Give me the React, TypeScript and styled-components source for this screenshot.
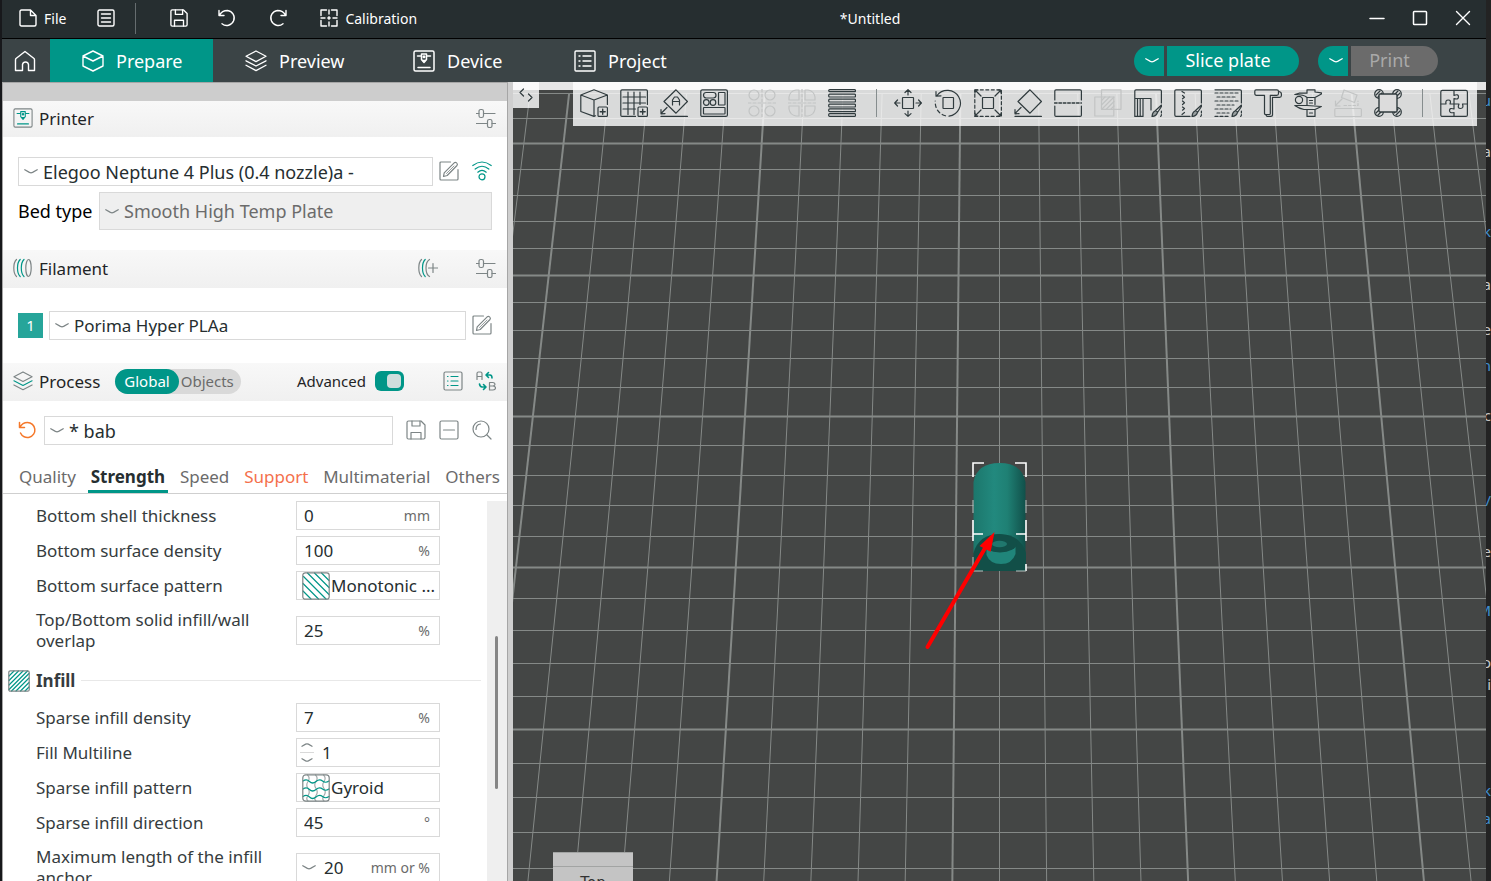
import React from "react";
import styled, { createGlobalStyle } from "styled-components";

const TEAL = "#009688";
const GRAY = "#6b6b6b";
const LINE = "#7d8586";

const GlobalStyle = createGlobalStyle`
  *, *::before, *::after { box-sizing: border-box; }
  body { margin: 0; background: #202020; }
  body, button, input, select {
    font-family: "Noto Sans", "Liberation Sans", sans-serif;
  }
  button { border: 0; padding: 0; background: none; color: inherit; }
  svg { display: block; flex: none; }
`;

/* ---------- shell ---------- */

const Desktop = styled.div`
  display: flex;
  height: 100vh;
  overflow: hidden;
  background: #1d1d1f;
`;

const LeftSliver = styled.div`
  flex: 0 0 2px;
  background: #17181b;
`;

const RightSliver = styled.div`
  position: relative;
  flex: 0 0 5px;
  overflow: hidden;
  background: #232323;
`;

const Fragment = styled.span<{ $top: number; $tone: string }>`
  position: absolute;
  right: 0;
  top: ${(p) => p.$top}px;
  color: ${(p) => p.$tone};
  font-size: 15px;
  line-height: 20px;
`;

const AppWindow = styled.main`
  display: flex;
  flex-direction: column;
  flex: 1;
  min-width: 0;
`;

const TitleBar = styled.header`
  display: flex;
  align-items: center;
  flex: 0 0 39px;
  padding: 0 2px 2px 17px;
  border-bottom: 1px solid #000;
  background: #262e30;
  color: #fff;
  font-size: 14px;
`;

const TitleButton = styled.button<{ $after?: number }>`
  display: flex;
  align-items: center;
  gap: 7px;
  height: 30px;
  margin-right: ${(p) => p.$after ?? 0}px;
  font-size: 14px;
`;

const TitleRule = styled.span`
  width: 1px;
  height: 31px;
  margin-right: 34px;
  background: #666d6f;
`;

const DocTitle = styled.h1`
  flex: 1;
  margin: 0 32px 0 0;
  font-size: 14px;
  font-weight: 400;
  text-align: center;
`;

const WindowButton = styled.button`
  display: grid;
  place-items: center;
  width: 43px;
  height: 36px;
`;

const NavBar = styled.nav`
  display: flex;
  align-items: center;
  flex: 0 0 43px;
  padding-right: 48px;
  background: #3b4446;
  color: #fff;
`;

const HomeButton = styled.button`
  display: grid;
  place-items: center;
  width: 48px;
  height: 43px;
  padding-right: 3px;
`;

const NavTab = styled.button<{ $width: number; $active?: boolean }>`
  display: flex;
  align-items: center;
  gap: 12px;
  width: ${(p) => p.$width}px;
  height: 43px;
  padding-left: 32px;
  background: ${(p) => (p.$active ? TEAL : "transparent")};
  font-size: 18px;
`;

const SplitButton = styled.div`
  display: flex;
  gap: 3px;
  margin-left: 19px;
  &:first-of-type { margin-left: auto; }
`;

const SplitCaret = styled.button`
  display: grid;
  place-items: center;
  width: 30px;
  height: 30px;
  padding-left: 5px;
  border-radius: 15px 0 0 15px;
  background: ${TEAL};
`;

const SplitMain = styled.button<{ $width: number }>`
  width: ${(p) => p.$width}px;
  height: 30px;
  padding: 0 10px 2px 0;
  border-radius: 0 15px 15px 0;
  background: ${TEAL};
  color: #fff;
  font-size: 18px;
  &:disabled { background: #6b6b6b; color: #a9a9a9; }
`;

const Body = styled.div`
  display: flex;
  flex: 1;
  min-height: 0;
`;

/* ---------- sidebar ---------- */

const Sidebar = styled.aside`
  display: flex;
  flex-direction: column;
  flex: 0 0 506px;
  min-height: 0;
  border-left: 1px solid #a6a6a6;
  border-right: 1px solid #a6a6a6;
  background: #fff;
  color: #1f2426;
  font-size: 17px;
`;

const Splitter = styled.div`
  flex: 0 0 5px;
  background: #cfcfcf;
`;

const GrayStrip = styled.div`
  flex: 0 0 19px;
  border-top: 1px solid #a6a6a6;
  background: #cdcdcd;
`;

const SectionHead = styled.div<{ $height?: number }>`
  display: flex;
  align-items: center;
  flex: 0 0 ${(p) => p.$height ?? 38}px;
  padding: 0 11px 2px 10px;
  background: linear-gradient(#f8f8f8, #f0f0f0);
`;

const SectionTitle = styled.h2`
  flex: 1;
  margin: 0 0 0 6px;
  font-size: 17px;
  font-weight: 400;
`;

const ProcessTitle = styled(SectionTitle)`
  flex: none;
`;

const IconButton = styled.button<{ $before?: number }>`
  margin-left: ${(p) => p.$before ?? 0}px;
`;

const Group = styled.div<{ $pad: number }>`
  display: flex;
  flex-direction: column;
  gap: 6px;
  padding: ${(p) => p.$pad}px 15px;
`;

const PresetGroup = styled(Group)`
  padding-bottom: 0;
`;

const Row = styled.div`
  display: flex;
  align-items: center;
  gap: 6px;
  ${IconButton} { padding-bottom: 2px; }
`;

const IconPair = styled.div`
  display: flex;
  gap: 13px;
`;

const PresetRow = styled(Row)`
  gap: 13px;
`;

const PresetPick = styled.div`
  display: flex;
  align-items: center;
  flex: 1;
  gap: 8px;
`;

const BedLabel = styled.label`
  width: 75px;
  color: #000;
  font-size: 18px;
  white-space: nowrap;
`;

const FilamentChip = styled.button`
  width: 25px;
  height: 25px;
  padding-bottom: 2px;
  background: #26a59a;
  color: #fff;
  font-size: 15px;
`;

const FieldBox = styled.div<{ $height?: number; $disabled?: boolean; $pad?: number }>`
  display: flex;
  align-items: center;
  flex: 1;
  gap: 5px;
  min-width: 0;
  height: ${(p) => p.$height ?? 29}px;
  padding-left: ${(p) => p.$pad ?? 5}px;
  border: 1px solid #d9d9d9;
  background: ${(p) => (p.$disabled ? "#efefef" : "#fff")};
`;

const Select = styled.select<{ $large?: boolean }>`
  flex: 1;
  min-width: 0;
  height: 26px;
  padding: 0;
  border: 0;
  background: transparent;
  appearance: none;
  color: #262e30;
  font-size: ${(p) => (p.$large ? 18 : 17)}px;
  &:disabled { color: ${GRAY}; opacity: 1; }
`;

const ScopeSwitch = styled.div`
  display: flex;
  height: 25px;
  margin-left: 15px;
  border-radius: 13px;
  background: #d9d9d9;
`;

const ScopeButton = styled.button<{ $active?: boolean }>`
  padding: ${(p) => (p.$active ? "0 9px" : "0 7px 0 2px")};
  border-radius: 13px;
  background: ${(p) => (p.$active ? TEAL : "transparent")};
  color: ${(p) => (p.$active ? "#fff" : "#6b6b6b")};
  font-size: 15px;
`;

const AdvancedLabel = styled.label`
  display: flex;
  align-items: center;
  gap: 9px;
  margin-left: auto;
  font-size: 15px;
`;

const Toggle = styled.input`
  display: flex;
  align-items: center;
  justify-content: flex-end;
  width: 29px;
  height: 20px;
  margin: 0;
  padding-right: 3px;
  border-radius: 6px;
  background: ${TEAL};
  appearance: none;
  &::before {
    content: "";
    width: 14px;
    height: 14px;
    border-radius: 4px;
    background: #cfdedd;
  }
`;

const TabRow = styled.div`
  display: flex;
  align-items: flex-end;
  justify-content: space-between;
  flex: 0 0 49px;
  padding: 0 7px 0 16px;
  border-bottom: 1px solid #cfcfcf;
`;

const SettingTab = styled.button<{ $active?: boolean; $warn?: boolean }>`
  height: 33px;
  margin: 0 -3px;
  padding: 3px 3px 0;
  border-bottom: 3px solid ${(p) => (p.$active ? TEAL : "transparent")};
  color: ${(p) => (p.$active ? "#262e30" : p.$warn ? "#f4704c" : "#6b6b6b")};
  font-size: 17px;
  font-weight: ${(p) => (p.$active ? 700 : 400)};
`;

const SettingsPane = styled.div`
  display: flex;
  flex: 1;
  min-height: 0;
  margin-top: 7px;
  overflow: hidden;
`;

const SettingsList = styled.div`
  display: flex;
  flex-direction: column;
  flex: 1;
  gap: 6px;
  padding: 0 6px 0 5px;
`;

const ScrollGutter = styled.div`
  flex: 0 0 20px;
  padding: 135px 0 0 8px;
  background: #efefef;
`;

const ScrollThumb = styled.div`
  width: 3px;
  height: 153px;
  border-radius: 2px;
  background: #868686;
`;

const SettingRow = styled.div<{ $tall?: boolean }>`
  display: grid;
  grid-template-columns: 260px 144px;
  align-items: center;
  flex: none;
  padding: ${(p) => (p.$tall ? "3px 0 5px 28px" : "0 0 0 28px")};
`;

const SettingLabel = styled.label`
  padding-right: 20px;
  color: #363c3e;
  line-height: 21px;
`;

const ValueInput = styled.input<{ $indent?: number }>`
  flex: 1;
  width: 0;
  min-width: 0;
  height: 24px;
  padding: 0 0 0 ${(p) => p.$indent ?? 0}px;
  border: 0;
  background: transparent;
  color: #262e30;
  font-size: 17px;
`;

const Unit = styled.span`
  padding-right: 9px;
  color: ${GRAY};
  font-size: 14px;
`;

const Spinner = styled.div`
  display: flex;
  flex-direction: column;
  gap: 5px;
  width: 14px;
  margin: 0 3px 0 -2px;
`;

const SpinnerRule = styled.span`
  height: 1px;
  background: #d9d9d9;
`;

const ListHead = styled.h3`
  display: flex;
  align-items: center;
  gap: 6px;
  flex: 0 0 22px;
  margin: 7px 0 5px;
  color: #363c3e;
  font-size: 17px;
  font-weight: 700;
  &::after {
    content: "";
    flex: 1;
    height: 1px;
    background: #e8e8e8;
  }
`;

/* ---------- viewport ---------- */

const Viewport = styled.section`
  position: relative;
  flex: 1;
  min-width: 0;
  overflow: hidden;
  background: #444645;
`;

const Scene = styled.svg`
  position: absolute;
  inset: 0;
  width: 100%;
  height: 100%;
`;

const Overlay = styled.div`
  position: relative;
  display: flex;
  align-items: flex-start;
  justify-content: space-between;
  padding-right: 9px;
`;

const CollapseButton = styled.button`
  display: grid;
  place-items: center;
  width: 26px;
  height: 26px;
  background: rgba(255, 255, 255, 0.8);
`;

const Toolbar = styled.div`
  display: flex;
  gap: 12px;
  height: 44px;
  padding: 7px 9px 0 7px;
  background: rgba(255, 255, 255, 0.8);
`;

const ToolButton = styled.button<{ $gap?: boolean }>`
  height: 28px;
  margin-left: ${(p) => (p.$gap ? 8 : 0)}px;
  color: #303b3e;
  &:disabled { color: #c2c4c4; }
`;

const ToolRule = styled.span`
  width: 1px;
  height: 28px;
  margin: 0 5px 0 8px;
  background: #868d8e;
`;

/* ---------- icons ---------- */

type IconProps = {
  size?: number;
  box?: number;
  color?: string;
  width?: number;
  children: React.ReactNode;
};

const Icon = ({ size = 20, box, color = "currentColor", width = 1.2, children }: IconProps) => (
  <svg
    width={size}
    height={size}
    viewBox={`0 0 ${box ?? size} ${box ?? size}`}
    fill="none"
    stroke={color}
    strokeWidth={width}
    strokeLinecap="round"
    strokeLinejoin="round"
    aria-hidden="true"
  >
    {children}
  </svg>
);

const Chevron = ({ color = LINE, up = false }: { color?: string; up?: boolean }) => (
  <svg width="14" height="5" viewBox="0 0 14 5" fill="none" stroke={color} strokeWidth="1.3" strokeLinecap="round" aria-hidden="true">
    <path d={up ? "M.8 4.2L5.4 1.6Q7 .8 8.6 1.6L13.2 4.2" : "M.8 .8L5.4 3.4Q7 4.2 8.6 3.4L13.2 .8"} />
  </svg>
);

const SpinChevron = ({ up = false }: { up?: boolean }) => (
  <svg width="14" height="4" viewBox="0 0 14 4" fill="none" stroke={LINE} strokeWidth="1.3" strokeLinecap="round" aria-hidden="true">
    <path d={up ? "M2 3.2L5.6 1.2Q7 .6 8.4 1.2L12 3.2" : "M2 .8L5.6 2.8Q7 3.4 8.4 2.8L12 .8"} />
  </svg>
);

const SaveShape = () => (
  <>
    <path d="M2.5 1H15L19 5V17.5Q19 19 17.5 19H2.5Q1 19 1 17.5V2.5Q1 1 2.5 1Z" />
    <path d="M6 1V6H14V1M5 19V12.5H15V19" />
  </>
);

const LayersShape = ({ accent }: { accent?: string }) => (
  <>
    <path d="M11 1L21 6.3L11 11.6L1 6.3Z" />
    <path d="M1 10.8L11 16L21 10.8" stroke={accent} />
    <path d="M1 15.3L11 20.6L21 15.3" />
  </>
);

const PrinterShape = ({ accent }: { accent?: string }) => (
  <>
    <rect x="1" y="1" width="20" height="20" rx="1.5" />
    <g stroke={accent}>
      <path d="M4.5 6H8M14 6H17.5M5 17.5H17" />
      <path d="M8.5 4H13.5V9.5L11 12.5L8.5 9.5Z" />
      <path d="M9.5 10.5H12.5" />
      <circle cx="11" cy="6.8" r=".8" />
    </g>
  </>
);

const EditIcon = () => (
  <Icon color={LINE}>
    <path d="M11.5 1H2Q1 1 1 2V18Q1 19 2 19H18Q19 19 19 18V8.5" />
    <path d="M4.5 15.5L5.2 11.8L15.2 1.8Q16.4 .8 17.6 1.9Q19 3.1 18 4.5L8.2 14.5Z" />
    <path d="M7.5 12.5L15 5" strokeWidth=".8" />
  </Icon>
);

const SlidersIcon = () => (
  <Icon color={LINE}>
    <path d="M0 5.5H3M7.5 5.5H19M0 15.5H11.5M16 15.5H19.5" />
    <rect x="3" y="1.5" width="4.5" height="8" rx="1.8" />
    <rect x="11.5" y="11.5" width="4.5" height="8" rx="1.8" />
  </Icon>
);

const Brush = () => (
  <>
    <path d="M27.5 16L21.5 21.5L23.5 23.5L27.8 17Z" />
    <path d="M21.5 21.8Q18.5 22.5 18 27.5Q22.8 27.2 23.3 23.7" fill="#9aa0a1" />
    <path d="M27.4 22V26Q27.4 27.4 26 27.4" strokeDasharray="2 1.5" />
  </>
);

const HatchDown = () => (
  <Icon size={28} color={LINE}>
    <path stroke={TEAL} d="M1 19L9 27M1 11.5L16.5 27M1.5 4.5L24 27M5.5 1L27 22.5M12.5 1L27 15.5M19.5 1L27 8.5" />
    <rect x=".8" y=".8" width="26.4" height="26.4" rx="2.5" />
  </Icon>
);

const HatchUp = () => (
  <Icon size={22} color={LINE}>
    <path stroke={TEAL} d="M1 6L6 1M1 10.5L10.5 1M1 15L15 1M1 19.5L19.5 1M3.5 21L21 3.5M8 21L21 8M12.5 21L21 12.5M17 21L21 17" />
    <rect x=".8" y=".8" width="20.4" height="20.4" rx="1.5" />
  </Icon>
);

const GyroidIcon = () => (
  <Icon size={28} color={LINE}>
    <path
      stroke="#a5abac"
      d="M5.5 1Q8.5 4 6 7.5T6 14.5T6 21.5T6 27M13.5 1Q16.5 4 14 7.5T14 14.5T14 21.5T14 27M21.5 1Q24.5 4 22 7.5T22 14.5T22 21.5T22 27"
    />
    <path
      stroke={TEAL}
      d="M1 7Q4.5 4.5 7.5 7.5T14 7.5T20.5 7T27 7M1 15Q4.5 12.5 7.5 15.5T14 15.5T20.5 15T27 15M1 22.5Q4.5 20 7.5 23T14 23T20.5 22.5T27 22.5"
    />
    <rect x=".8" y=".8" width="26.4" height="26.4" rx="3" />
  </Icon>
);

const PlusBadge = () => (
  <>
    <rect x="18" y="18" width="9.4" height="9.4" rx="1" />
    <path d="M22.7 20.2V25.2M20.2 22.7H25.2" strokeWidth="1.4" />
  </>
);

const tools: { name: string; off?: boolean; gap?: boolean; rule?: boolean; art: React.ReactNode }[] = [
  {
    name: "Add object",
    art: (
      <>
        <path d="M27.4 15.5V6L14 .8L.8 6V22.5L14 27.4L15.5 26.8M.8 6L14 11L27.4 6M14 11V27.4" />
        <PlusBadge />
      </>
    ),
  },
  {
    name: "Add plate",
    art: (
      <>
        <path d="M27.4 15.5V2Q27.4 .8 26.3 .8H2Q.8 .8 .8 2V26.3Q.8 27.4 2 27.4H15.5" />
        <path d="M8 3V25.5M14 3V25.5M20 3V15.5M3 8H25.5M3 14H25.5M3 20H15.5" />
        <PlusBadge />
      </>
    ),
  },
  {
    name: "Auto orient",
    art: (
      <>
        <path d="M16 .8L27.4 12.5L16 24.2L4 12.5Z" />
        <path d="M12.5 16V11L14.5 8H17.5L19.5 11V16M12.5 12.5H19.5M7 18.5L1 24.5M1 20.5V24.8L5 24.6" />
        <path d="M1 27.4H27.4" />
      </>
    ),
  },
  {
    name: "Arrange",
    art: (
      <>
        <rect x=".8" y=".8" width="26.6" height="26.6" rx="1.5" />
        <rect x="3.5" y="3.5" width="12.5" height="5.5" rx="2.7" />
        <rect x="18.5" y="3.5" width="6.5" height="12.5" rx=".5" />
        <circle cx="6.3" cy="13.5" r="2.8" />
        <circle cx="13" cy="13.5" r="2.8" />
        <rect x="3.5" y="18.5" width="21.5" height="6.5" rx=".5" />
      </>
    ),
  },
  {
    name: "Split to objects",
    off: true,
    gap: true,
    art: (
      <>
        <circle cx="6" cy="6" r="5" />
        <circle cx="22" cy="6" r="5" />
        <circle cx="6" cy="22" r="5" />
        <circle cx="22" cy="22" r="5" />
        <path strokeDasharray="3 2" d="M14 0V28M0 14H28" />
      </>
    ),
  },
  {
    name: "Split to parts",
    off: true,
    art: (
      <>
        <path d="M11 11H1V8Q2 2 8 1H11ZM17 11H27V8Q26 2 20 1H17ZM11 17H1V20Q2 26 8 27H11ZM17 17H27V20Q26 26 20 27H17Z" />
        <path strokeDasharray="3 2" d="M14 0V28M0 14H28" />
      </>
    ),
  },
  {
    name: "Variable layer height",
    art: (
      <>
        {[0.7, 5.2, 10.2, 15.2, 19.9, 24.6].map((y, i) => (
          <rect key={y} x=".7" y={y} width="26.8" height={i === 0 ? 2 : 2.8} rx="1" />
        ))}
      </>
    ),
  },
  {
    name: "Move",
    rule: true,
    art: (
      <>
        <rect x="8.5" y="8.5" width="11" height="11" rx=".5" />
        <path d="M14 6V.8M11 3.5L14 .7L17 3.5M14 22V27.3M11 24.6L14 27.4L17 24.6M6 14H.8M3.5 11L.7 14L3.5 17M22 14H27.3M24.6 11L27.4 14L24.6 17" />
      </>
    ),
  },
  {
    name: "Rotate",
    art: (
      <>
        <rect x="9" y="8.5" width="10.5" height="11" rx=".5" />
        <path d="M3 6.5A13 13 0 1 1 15 27.2M2 2.5V7.2L7 6.8" />
        <path strokeDasharray="3.5 3" d="M11.5 26.8Q1 23.5 1.2 12" />
      </>
    ),
  },
  {
    name: "Scale",
    art: (
      <>
        <rect x="8.5" y="8.5" width="11" height="11" rx=".5" />
        <rect x=".8" y=".8" width="26.6" height="26.6" strokeDasharray="3 2.5" />
        <path d="M7 7L1.5 1.5M21 7L26.5 1.5M7 21L1.5 26.5M21 21L26.5 26.5M1 4V1H4M24 1H27V4M1 24V27H4M24 27H27V24" />
      </>
    ),
  },
  {
    name: "Lay on face",
    art: (
      <>
        <path d="M16 .8L27.4 12.5L16 24.2L4 12.5Z" />
        <path d="M7 18.5L1 24.5M1 20.5V24.8L5 24.6M1 27.4H27.4" />
      </>
    ),
  },
  {
    name: "Cut",
    art: (
      <>
        <path d="M.8 11V2Q.8 .8 2 .8H26Q27.4 .8 27.4 2V11M.8 17V26.2Q.8 27.4 2 27.4H26Q27.4 27.4 27.4 26.2V17" />
        <path strokeDasharray="2.6 1.8" d="M.5 14H27.5" strokeWidth="1.4" />
      </>
    ),
  },
  {
    name: "Mesh boolean",
    off: true,
    art: (
      <>
        <rect x=".8" y="8" width="19" height="19" />
        <rect x="7.5" y=".8" width="19.5" height="19.5" />
        <path d="M8 11L11 8M8 15.5L15.5 8M8 20L20 8M12.5 20L20 12.5M17 20L20 17" />
      </>
    ),
  },
  {
    name: "Paint supports",
    art: (
      <>
        <path d="M27.4 14V2Q27.4 .8 26 .8H2Q.8 .8 .8 2V9.5M.8 9.5H17V21M9 9.5V27.4H.8V9.5M3.5 9.5V27M6.2 9.5V27" />
        <Brush />
      </>
    ),
  },
  {
    name: "Paint seam",
    art: (
      <>
        <path d="M27.4 14V2Q27.4 .8 26 .8H2Q.8 .8 .8 2V26Q.8 27.4 2 27.4H16" />
        <path d="M8 2.5L10.5 4M8.5 6.5L10.5 8.2L8.500 9.8M8.5 12L10.5 13.8L8.5 15.500M8.5 18L10.5 19.5L8.5 21.2M10.500 23.5L8 25.5" />
        <Brush />
      </>
    ),
  },
  {
    name: "Fuzzy skin",
    art: (
      <>
        <path d="M1 .8H26Q27.4 .8 27.4 2V14" />
        <path strokeDasharray="3 2" d="M1 4H24M3 8H22M1 12H24M3 16H20M1 20H17M3 24H15M1 27.4H15" />
        <Brush />
      </>
    ),
  },
  {
    name: "Text shape",
    art: (
      <>
        <path d="M2 .8H23Q24.5 .8 24.5 2.5V4.5Q24.5 6.3 22.8 6.3H16.3V24.5Q16.3 25.5 15.3 25.5H11.5Q10.5 25.5 10.5 24.5V6.3H2.5Q.8 6.3 .8 4.5V2.2Q.8 .8 2 .8Z" />
        <path d="M25 2.5Q27.4 3 27.4 5V6.5Q27.4 8.3 25.5 8.3H18.5V26Q18.5 27.4 17 27.4H13L11.5 25.5" />
      </>
    ),
  },
  {
    name: "Measure",
    art: (
      <>
        <path d="M.8 5.5L5 4.2H13V.8H21V3L27.4 3.8V5L21 8.5H13Q10 5.5 .8 5.5ZM13 8.5V16M21 8.5V15.5" />
        <circle cx="5" cy="11" r="3.6" />
        <path d="M.8 16.5H13L27.4 17.5L21 20.5H10Q5 19.5 .8 16.5ZM13 20.5V27.4H21V20.5M15.5 24H18.5M15.5 11.5H18.5M15.5 14H18.5" />
      </>
    ),
  },
  {
    name: "Assemble",
    off: true,
    art: (
      <>
        <path d="M10 1L23 6L20.5 13.5L7.5 8.5ZM8 10L1.5 16.5M1.5 12V17H6" />
        <rect x=".8" y="19.5" width="26.6" height="8" rx="1" />
        <path strokeDasharray="2.5 2" d="M10 16.5H24V12" />
      </>
    ),
  },
  {
    name: "Brim ears",
    art: (
      <>
        {[
          [5, 5],
          [23, 5],
          [5, 23],
          [23, 23],
        ].map(([x, y]) => (
          <g key={`${x}-${y}`}>
            <circle cx={x} cy={y} r="4.3" />
            <path d={`M${x - 3} ${y + 1}L${x + 1} ${y - 3}M${x - 1} ${y + 3}L${x + 3} ${y - 1}`} />
          </g>
        ))}
        <rect x="5" y="5" width="18" height="18" rx="1" fill="#dcdcdc" strokeWidth="1.4" />
      </>
    ),
  },
  {
    name: "Assembly view",
    rule: true,
    art: (
      <>
        <rect x=".8" y="1.4" width="26.6" height="26" rx="1.5" />
        <path d="M14 2V6.5Q18.500 4.5 18.5 7.8T14 9.5V15H10Q11.5 11 8.3 11T6 15H1M14 15H19Q17 19.5 20.5 19.5T22.5 15H27M14 15V20Q9.5 18.5 9.5 21.5T14 23.5V27" />
      </>
    ),
  },
];

/* ---------- 3D scene ---------- */

const CENTER_X = 999.5;
const spacingAt = (y: number) => 39.6 + 0.0102 * (y - 140);
const columnX = (i: number, y: number) => CENTER_X + i * spacingAt(y);
const plateRows = [
  93, 118, 143, 169, 195, 221, 248, 275, 302, 330, 358, 387, 416, 445, 475, 505, 536, 567, 598, 630, 663, 696, 729,
  763, 797, 832, 868,
];
const plateColumns = Array.from({ length: 27 }, (_, k) => k - 13);

const PlateScene = () => (
  <Scene viewBox="513 82 973 799" preserveAspectRatio="xMidYMin slice" role="img" aria-label="Build plate">
    <defs>
      <linearGradient id="tube" x1="0" x2="1" y1="0" y2="0">
        <stop offset="0" stopColor="#1c776c" />
        <stop offset=".4" stopColor="#22897e" />
        <stop offset=".65" stopColor="#1f8074" />
        <stop offset="1" stopColor="#11504a" />
      </linearGradient>
      <clipPath id="plate">
        <rect x="513" y="90" width="973" height="900" />
      </clipPath>
    </defs>
    <rect x="513" y="82" width="973" height="8" fill="#e6e6e6" />
    <g clipPath="url(#plate)" stroke="#858987">
      {plateRows.map((y, k) => (
        <path key={y} d={`M513 ${y + 0.5}H1486`} strokeWidth={k % 5 === 2 ? 1.8 : 1} />
      ))}
      {plateColumns.map((i) => (
        <path
          key={i}
          d={`M${columnX(i, 93)} 93L${columnX(i, 900)} 900`}
          strokeWidth={(i + 16) % 5 === 0 ? 2 : 1}
        />
      ))}
    </g>

    <path d="M973.5 553V482Q977 463 999.5 463T1025.5 482V553Z" fill="url(#tube)" />
    <path d="M973.5 571V553Q979 534 999.5 534T1026 553V571Z" fill="#124f48" />
    <path d="M986.5 546V555Q990 564 1001 564T1015.5 554V544Z" fill="#20857a" />
    <ellipse cx="1000" cy="543.5" rx="17" ry="9" fill="#124f48" />
    <ellipse cx="999.5" cy="544" rx="7.5" ry="3.2" fill="#20776d" />
    <g fill="none" stroke="#fff" strokeWidth="1.6">
      <path d="M973 477V463H984M1015 463H1026V477M973 520V541M1026 520V541M973 534H983M1016 534H1026M1026 564V571" />
      <path d="M973 500V513M1026 500V513M973 557V571H983M1016 571H1026" stroke="#b9c4c2" strokeWidth="1" />
    </g>

    <path d="M927.5 647L988 543" stroke="#f00" strokeWidth="4" strokeLinecap="round" />
    <path d="M994.5 532L979.5 546L990.7 551.7Z" fill="#f00" />

    <rect x="553" y="852" width="80" height="40" fill="#c4c4c4" />
    <path d="M553 852.5H633M553 866.5H633" stroke="#a2a4a3" />
    <text x="593" y="888" fill="#333" fontFamily="DejaVu Sans, sans-serif" fontSize="15" textAnchor="middle">
      Top
    </text>
  </Scene>
);

/* ---------- data ---------- */

const fragments: [number, string, string][] = [
  [90, "u", "#3f8fd0"],
  [141, "a", "#c8c8c8"],
  [221, "k", "#3f8fd0"],
  [274, "a", "#c8c8c8"],
  [319, "e", "#c8c8c8"],
  [355, "n", "#3f8fd0"],
  [405, "c", "#c8c8c8"],
  [490, "/", "#3f8fd0"],
  [541, "e", "#c8c8c8"],
  [600, "M", "#3f8fd0"],
  [652, "o", "#c8c8c8"],
  [674, "i", "#c8c8c8"],
  [780, "k", "#3f8fd0"],
  [808, "a", "#3f8fd0"],
];

type Setting = {
  id: string;
  label: string;
  value: string;
  unit?: string;
  kind?: "spin" | "combo";
  icon?: React.ReactNode;
  tall?: boolean;
};

const shellSettings: Setting[] = [
  { id: "bst", label: "Bottom shell thickness", value: "0", unit: "mm" },
  { id: "bsd", label: "Bottom surface density", value: "100", unit: "%" },
  { id: "bsp", label: "Bottom surface pattern", value: "Monotonic ...", icon: <HatchDown /> },
  { id: "tbo", label: "Top/Bottom solid infill/wall overlap", value: "25", unit: "%", tall: true },
];

const infillSettings: Setting[] = [
  { id: "sid", label: "Sparse infill density", value: "7", unit: "%" },
  { id: "fml", label: "Fill Multiline", value: "1", kind: "spin" },
  { id: "sip", label: "Sparse infill pattern", value: "Gyroid", icon: <GyroidIcon /> },
  { id: "sir", label: "Sparse infill direction", value: "45", unit: "°" },
  { id: "mla", label: "Maximum length of the infill anchor", value: "20", unit: "mm or %", kind: "combo", tall: true },
];

const PatternBox = styled(FieldBox)`
  gap: 1px;
`;

const SettingField = ({ item }: { item: Setting }) => {
  if (item.icon) {
    return (
      <PatternBox $pad={5}>
        {item.icon}
        <Select id={item.id}>
          <option>{item.value}</option>
        </Select>
      </PatternBox>
    );
  }
  return (
    <FieldBox $pad={item.kind ? 5 : 7}>
      {item.kind === "spin" && (
        <Spinner>
          <SpinChevron up />
          <SpinnerRule />
          <SpinChevron />
        </Spinner>
      )}
      {item.kind === "combo" && <Chevron />}
      <ValueInput id={item.id} defaultValue={item.value} $indent={item.kind === "combo" ? 3 : 0} />
      {item.unit && <Unit>{item.unit}</Unit>}
    </FieldBox>
  );
};

const SettingRows = ({ items }: { items: Setting[] }) => (
  <>
    {items.map((item) => (
      <SettingRow key={item.id} $tall={item.tall}>
        <SettingLabel htmlFor={item.id}>{item.label}</SettingLabel>
        <SettingField item={item} />
      </SettingRow>
    ))}
  </>
);

const settingTabs = ["Quality", "Strength", "Speed", "Support", "Multimaterial", "Others"];

export default function App() {
  return (
    <Desktop>
      <GlobalStyle />
      <LeftSliver />
      <AppWindow>
        <TitleBar>
          <TitleButton $after={31}>
            <Icon size={18} width={1.4}>
              <path d="M2.5 1H11.5L17 6.5V15.5Q17 17 15.5 17H2.5Q1 17 1 15.5V2.5Q1 1 2.5 1ZM11.5 1V6.5H17" />
            </Icon>
            File
          </TitleButton>
          <TitleButton $after={20} aria-label="Menu">
            <Icon size={18} width={1.4}>
              <rect x="1" y="1" width="16" height="16" rx="1.5" />
              <path d="M4.5 5H13.5M4.5 9H13.5M4.5 13H13.5" />
            </Icon>
          </TitleButton>
          <TitleRule />
          <TitleButton $after={30} aria-label="Save">
            <Icon size={18} box={20} width={1.5}>
              <SaveShape />
            </Icon>
          </TitleButton>
          <TitleButton $after={33} aria-label="Undo">
            <Icon size={18} width={1.4}>
              <path d="M1 1.5V6.5H6M1.300 6.3Q4 1.5 9.5 1.5A7.5 7.5 0 1 1 4 14.8" />
            </Icon>
          </TitleButton>
          <TitleButton $after={33} aria-label="Redo">
            <Icon size={18} width={1.4}>
              <path d="M17 1.5V6.5H12M16.7 6.3Q14 1.5 8.5 1.5A7.5 7.5 0 1 0 14 14.8" />
            </Icon>
          </TitleButton>
          <TitleButton>
            <Icon size={18} width={1.4}>
              <path d="M6.5 1H1V6.5M11.5 1H17V6.5M6.5 17H1V11.5M11.5 17H17V11.5M9 1V5M9 13V17M1 9H5M13 9H17M7.8 9H10.2M9 7.8V10.2" />
            </Icon>
            Calibration
          </TitleButton>
          <DocTitle>*Untitled</DocTitle>
          <WindowButton aria-label="Minimize">
            <Icon size={16} width={1.5}>
              <path d="M1 8.5H15" />
            </Icon>
          </WindowButton>
          <WindowButton aria-label="Maximize">
            <Icon size={16} width={1.5}>
              <rect x="1.5" y="1.5" width="13" height="13" rx=".8" />
            </Icon>
          </WindowButton>
          <WindowButton aria-label="Close">
            <Icon size={16} width={1.4}>
              <path d="M1.5 1.5L14.5 14.5M14.5 1.5L1.5 14.5" />
            </Icon>
          </WindowButton>
        </TitleBar>

        <NavBar>
          <HomeButton aria-label="Home">
            <Icon size={22} width={1.4}>
              <path d="M2 8.5L11 1.5L20 8.5Q20.5 9 20.5 10V20.5H14.5V14.5Q14 12 11.500 12T8.5 14.5V20.5H1.5V10Q1.5 9 2 8.5Z" />
            </Icon>
          </HomeButton>
          <NavTab $width={163} $active>
            <Icon size={22} width={1.4}>
              <path d="M11 1L21 6V16L11 21L1 16V6ZM1 6L11 11L21 6" />
            </Icon>
            Prepare
          </NavTab>
          <NavTab $width={168}>
            <Icon size={22} width={1.3}>
              <LayersShape />
            </Icon>
            Preview
          </NavTab>
          <NavTab $width={161}>
            <Icon size={22} width={1.5}>
              <PrinterShape />
            </Icon>
            Device
          </NavTab>
          <NavTab $width={160}>
            <Icon size={22} width={1.4}>
              <rect x="1" y="1" width="20" height="20" rx="1" />
              <path d="M5 6H6M9 6H17M5 11H6M9 11H17M5 16H6M9 16H17" />
            </Icon>
            Project
          </NavTab>
          <SplitButton>
            <SplitCaret aria-label="Slice options">
              <Chevron color="#fff" />
            </SplitCaret>
            <SplitMain $width={132}>Slice plate</SplitMain>
          </SplitButton>
          <SplitButton>
            <SplitCaret aria-label="Print options">
              <Chevron color="#fff" />
            </SplitCaret>
            <SplitMain $width={87} disabled>
              Print
            </SplitMain>
          </SplitButton>
        </NavBar>

        <Body>
          <Sidebar>
            <GrayStrip />
            <SectionHead $height={36}>
              <Icon color={LINE} box={22}>
                <PrinterShape accent={TEAL} />
              </Icon>
              <SectionTitle>Printer</SectionTitle>
              <IconButton aria-label="Printer settings">
                <SlidersIcon />
              </IconButton>
            </SectionHead>
            <Group $pad={20}>
              <Row>
                <FieldBox>
                  <Chevron />
                  <Select $large aria-label="Printer preset">
                    <option>Elegoo Neptune 4 Plus (0.4 nozzle)a -</option>
                  </Select>
                </FieldBox>
                <IconPair>
                  <IconButton aria-label="Edit printer">
                    <EditIcon />
                  </IconButton>
                  <IconButton aria-label="Network">
                    <Icon color={TEAL}>
                      <path d="M.8 4.5Q10 -2.5 19.2 4.5M3.2 8Q10 2.5 16.8 8M5.8 11.2Q10 7.5 14.2 11.2" />
                      <circle cx="10" cy="15.8" r="3" />
                    </Icon>
                  </IconButton>
                </IconPair>
              </Row>
              <Row>
                <BedLabel htmlFor="bed">Bed type</BedLabel>
                <FieldBox $height={38} $disabled>
                  <Chevron />
                  <Select $large id="bed" disabled>
                    <option>Smooth High Temp Plate</option>
                  </Select>
                </FieldBox>
              </Row>
            </Group>

            <SectionHead>
              <Icon color={LINE}>
                <ellipse cx="15.5" cy="10" rx="2.7" ry="8.5" />
                <path d="M3.5 1.5Q.8 4 .8 10T3.5 18.5" />
                <path stroke={TEAL} d="M7.2 1.5Q4.5 4 4.5 10T7.2 18.5M11 1.5Q8.3 4 8.3 10T11 18.5" />
              </Icon>
              <SectionTitle>Filament</SectionTitle>
              <IconButton aria-label="Add filament">
                <Icon color={LINE}>
                  <path d="M3.5 1.5Q.8 4 .8 10T3.5 18.5M11.5 1.5Q8 3.5 8 10T11.5 18.5M10.500 10H19.5M15 5.5V14.5" />
                  <path stroke={TEAL} d="M7.2 1.5Q4.5 4 4.5 10T7.2 18.5" />
                </Icon>
              </IconButton>
              <IconButton $before={38} aria-label="Filament settings">
                <SlidersIcon />
              </IconButton>
            </SectionHead>
            <Group $pad={23}>
              <Row>
                <FilamentChip>1</FilamentChip>
                <FieldBox>
                  <Chevron />
                  <Select aria-label="Filament preset">
                    <option>Porima Hyper PLAa</option>
                  </Select>
                </FieldBox>
                <IconButton aria-label="Edit filament">
                  <EditIcon />
                </IconButton>
              </Row>
            </Group>

            <SectionHead>
              <Icon color={LINE} box={22}>
                <LayersShape accent={TEAL} />
              </Icon>
              <ProcessTitle>Process</ProcessTitle>
              <ScopeSwitch>
                <ScopeButton $active>Global</ScopeButton>
                <ScopeButton>Objects</ScopeButton>
              </ScopeSwitch>
              <AdvancedLabel>
                Advanced
                <Toggle type="checkbox" defaultChecked />
              </AdvancedLabel>
              <IconButton $before={39} aria-label="Setting list">
                <Icon color={LINE}>
                  <rect x="1" y="1" width="18" height="18" rx="1.5" />
                  <path stroke={TEAL} d="M4.5 5.5H5M8 5.5H15M4.5 10H5M8 10H15M4.5 14.5H5M8 14.5H15" />
                </Icon>
              </IconButton>
              <IconButton $before={13} aria-label="Compare presets">
                <Icon color={LINE}>
                  <path d="M1 8.5V2.5Q1 1 2.5 1H4.5Q6 1 6 2.5V8.5M1 5.5H6M13.5 11.5H17Q19 11.8 19 13.2T17 15H13.5M17 15Q19.5 15.2 19.5 17T17 19H13.5V11.5" />
                  <path stroke={TEAL} strokeWidth="1.6" d="M12.5 1.5L10 4L12.5 6.5M10.5 4H14Q16 4.2 16 7M7.5 18.5L10 16L7.5 13.5M9.5 16H6Q4 15.8 3.5 13" />
                </Icon>
              </IconButton>
            </SectionHead>
            <PresetGroup $pad={15}>
              <PresetRow>
                <PresetPick>
                  <IconButton aria-label="Reset preset">
                    <Icon size={18} color="#f5782a" width={1.5}>
                      <path d="M1.5 1.5V6.5H6.5M1.8 6.3Q4.500 1.5 9.5 1.5A7.5 7.5 0 1 1 2.5 12" />
                    </Icon>
                  </IconButton>
                  <FieldBox>
                    <Chevron />
                    <Select $large aria-label="Process preset">
                      <option>* bab</option>
                    </Select>
                  </FieldBox>
                </PresetPick>
                <IconButton aria-label="Save preset">
                  <Icon color={LINE}>
                    <SaveShape />
                  </Icon>
                </IconButton>
                <IconButton aria-label="Delete preset">
                  <Icon color={LINE}>
                    <rect x="1" y="1" width="18" height="18" rx="1.5" />
                    <path d="M4.5 10H15.5" />
                  </Icon>
                </IconButton>
                <IconButton aria-label="Search settings">
                  <Icon color={LINE}>
                    <circle cx="9" cy="9" r="8" />
                    <path d="M15 15L19 19M4 9.5Q4 4.5 8.5 4" />
                  </Icon>
                </IconButton>
              </PresetRow>
            </PresetGroup>

            <TabRow>
              {settingTabs.map((t) => (
                <SettingTab key={t} $active={t === "Strength"} $warn={t === "Support"}>
                  {t}
                </SettingTab>
              ))}
            </TabRow>

            <SettingsPane>
              <SettingsList>
                <SettingRows items={shellSettings} />
                <ListHead>
                  <HatchUp />
                  Infill
                </ListHead>
                <SettingRows items={infillSettings} />
              </SettingsList>
              <ScrollGutter>
                <ScrollThumb />
              </ScrollGutter>
            </SettingsPane>
          </Sidebar>
          <Splitter />

          <Viewport>
            <PlateScene />
            <Overlay>
              <CollapseButton aria-label="Collapse sidebar">
                <Icon size={14} color="#303b3e">
                  <path d="M4.5 1L1 4.5L4.5 8M9.5 6L13 9.5L9.5 13" />
                </Icon>
              </CollapseButton>
              <Toolbar>
                {tools.map((t) => (
                  <React.Fragment key={t.name}>
                    {t.rule && <ToolRule />}
                    <ToolButton aria-label={t.name} disabled={t.off} $gap={t.gap}>
                      <Icon size={28} width={1.2}>
                        {t.art}
                      </Icon>
                    </ToolButton>
                  </React.Fragment>
                ))}
              </Toolbar>
            </Overlay>
          </Viewport>
        </Body>
      </AppWindow>
      <RightSliver aria-hidden="true">
        {fragments.map(([top, glyph, tone]) => (
          <Fragment key={top} $top={top} $tone={tone}>
            {glyph}
          </Fragment>
        ))}
      </RightSliver>
    </Desktop>
  );
}
